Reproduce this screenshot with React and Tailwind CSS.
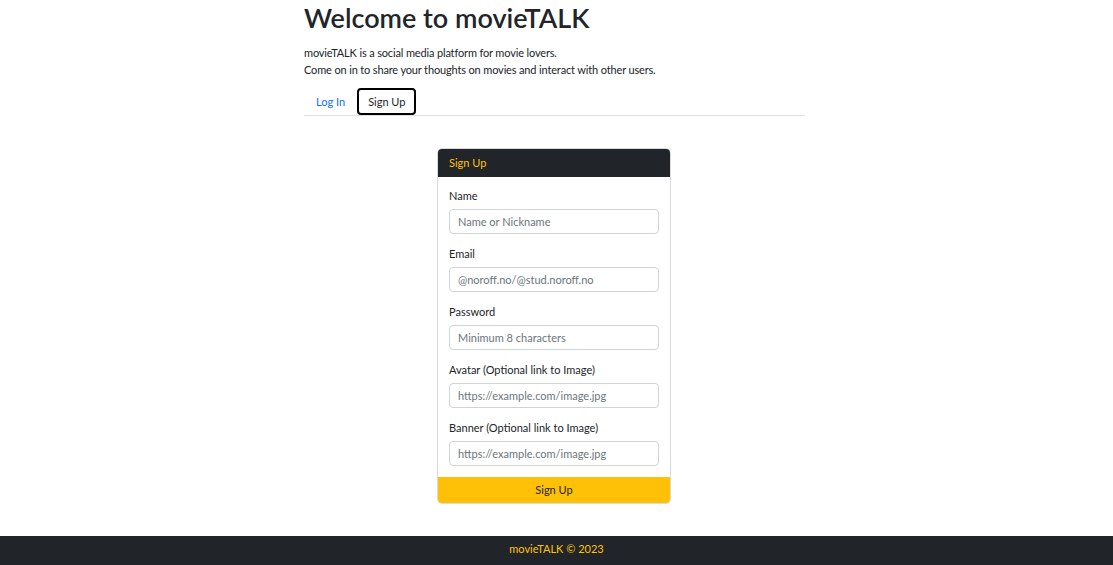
import React from 'react';

const fields = [
  { label: 'Name', placeholder: 'Name or Nickname', type: 'text' },
  { label: 'Email', placeholder: '@noroff.no/@stud.noroff.no', type: 'email' },
  { label: 'Password', placeholder: 'Minimum 8 characters', type: 'password' },
  { label: 'Avatar (Optional link to Image)', placeholder: 'https://example.com/image.jpg', type: 'url' },
  { label: 'Banner (Optional link to Image)', placeholder: 'https://example.com/image.jpg', type: 'url' },
];

const App = () => {
  return (
    <div className="min-h-[565px] flex flex-col bg-white text-[#212529] font-['Lato',sans-serif] text-[12px] leading-[18px]">
      <main className="flex-1">
        {/* Intro */}
        <div className="w-[501px] ml-[304px]">
          <h1 className="text-[27px] leading-[34px] font-semibold pt-[1px] mb-[9px]">Welcome to movieTALK</h1>
          <p className="text-[11px] leading-[17px] tracking-[-0.15px]">movieTALK is a social media platform for movie lovers.</p>
          <p className="text-[11px] leading-[17px] tracking-[-0.15px]">Come on in to share your thoughts on movies and interact with other users.</p>

          {/* Tabs */}
          <div className="flex mt-[10px] border-b border-[#dee2e6]">
            <button className="h-[27px] px-[10px] text-[11px] text-[#0d6efd] border-2 border-transparent">Log In</button>
            <button className="h-[27px] px-[9px] text-[11px] border-2 border-black rounded-[4px]">Sign Up</button>
          </div>
        </div>

        {/* Sign up card */}
        <div className="w-[234px] ml-[437px] mt-[32px] mb-[32px] border border-[#d8dadd] rounded-[5px] overflow-hidden">
          <div className="h-[28px] bg-[#212529] text-[#ffc107] px-[11px] flex items-center text-[11px]">Sign Up</div>
          <form className="pt-[10px]">
            <div className="px-[11px]">
              {fields.map((f) => (
                <div key={f.label} className="mb-[11px]">
                  <label className="block text-[11px] leading-[18px] mb-[4px]">{f.label}</label>
                  <input
                    type={f.type}
                    placeholder={f.placeholder}
                    className="w-full h-[25px] px-[8px] text-[11px] border border-[#ced4da] rounded-[4px] placeholder:text-[#6c757d] outline-none"
                  />
                </div>
              ))}
            </div>
            <button type="button" className="w-full h-[26px] bg-[#ffc107] text-[11px] text-[#212529]">Sign Up</button>
          </form>
        </div>
      </main>

      {/* Footer */}
      <footer className="h-[29px] bg-[#212529] text-[#ffc107] pt-[4px] text-center text-[11px] leading-[18px]">
        movieTALK © 2023
      </footer>
    </div>
  );
};

export default App;
